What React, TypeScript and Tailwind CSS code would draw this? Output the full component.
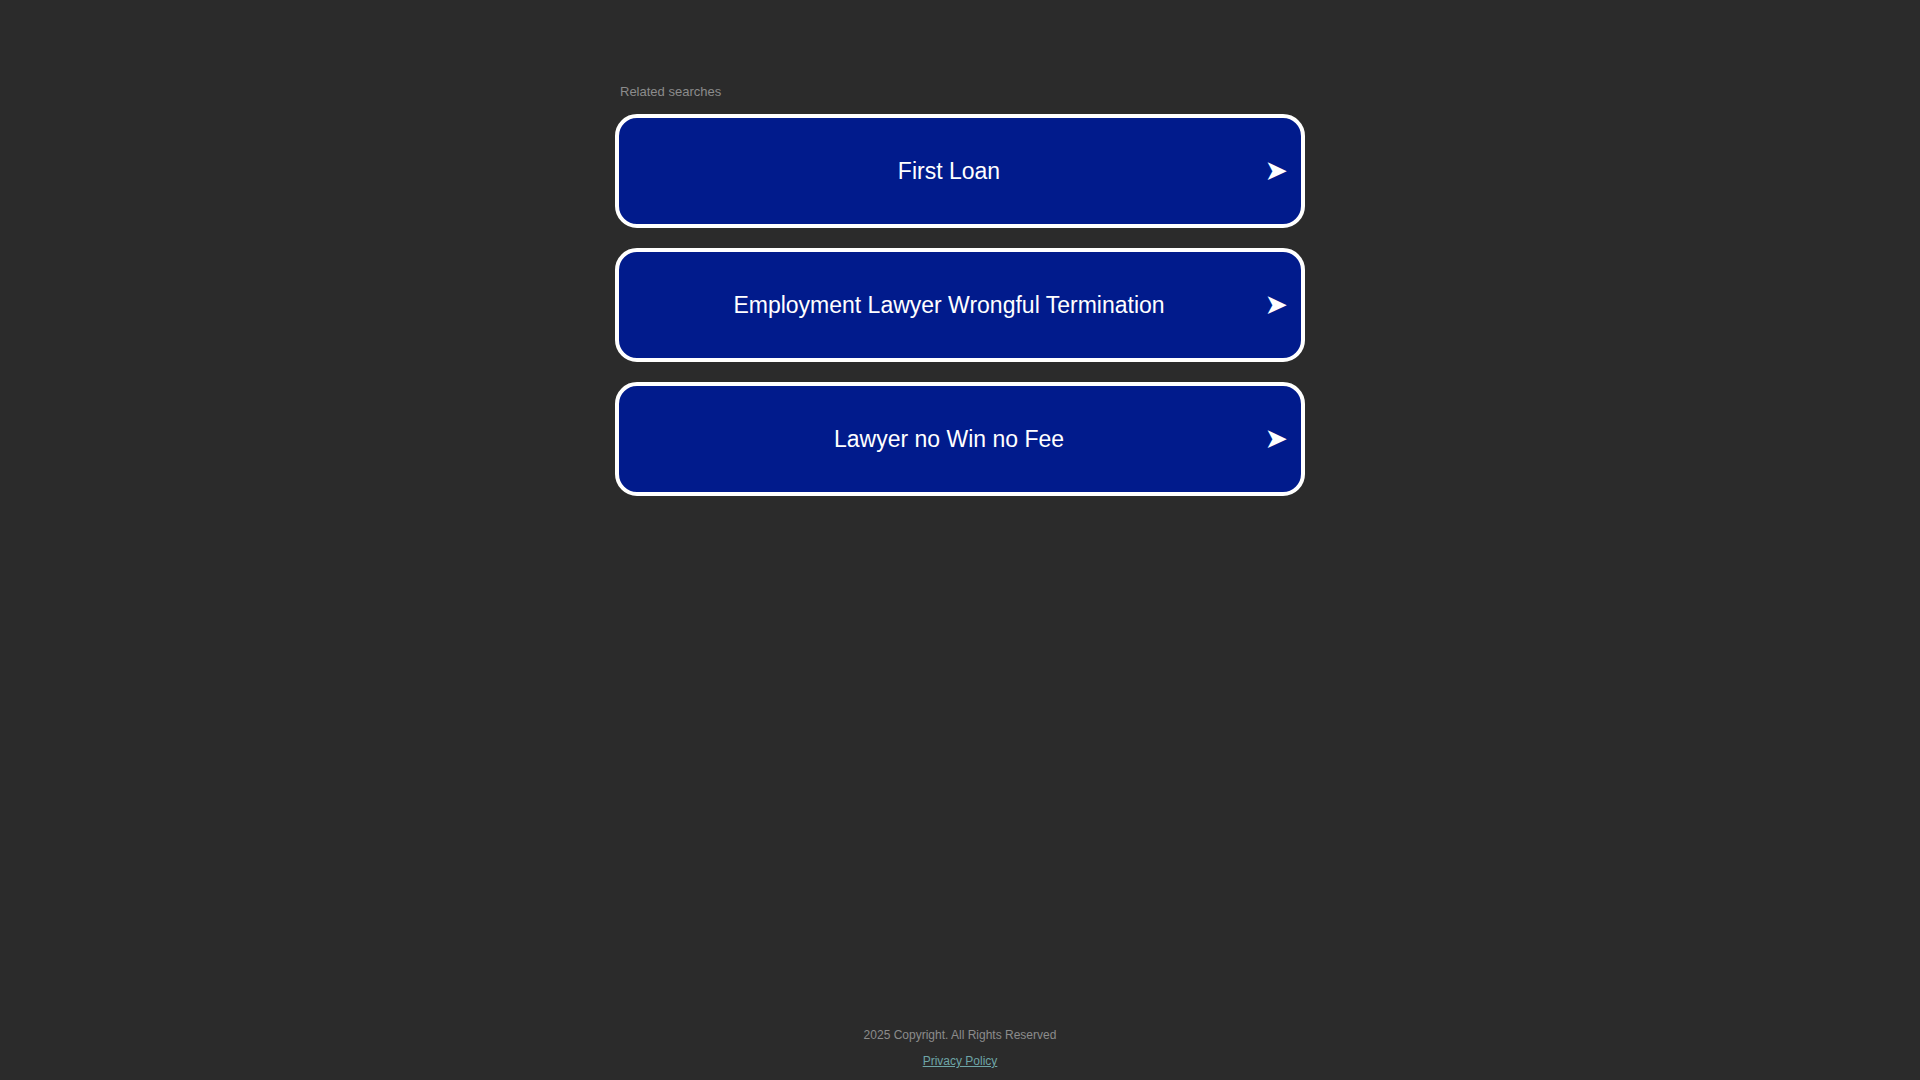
const searches = [
  'First Loan',
  'Employment Lawyer Wrongful Termination',
  'Lawyer no Win no Fee',
]

export default function App() {
  return (
    <div
      className="flex h-screen flex-col bg-[#2b2b2b]"
      style={{ fontFamily: '"Liberation Sans", Arial, sans-serif' }}
    >
      {/* Related searches */}
      <main className="flex-1 pt-[84px]">
        <div className="mx-auto w-[690px]">
          <p className="pl-[5px] text-[13px] leading-[16px] text-[#8c8c8c]">Related searches</p>
          <div className="mt-[14px] flex flex-col gap-[20px]">
            {searches.map((term) => (
              <a
                key={term}
                href="#"
                className="relative flex h-[114px] items-center rounded-[22px] border-[4px] border-white bg-[#011b8c] text-white"
              >
                <span className="w-full pr-[22px] text-center text-[23px] leading-[28px]">{term}</span>
                <span
                  className="absolute right-[13px] top-1/2 -translate-y-1/2 text-[28px] leading-none"
                  style={{ fontFamily: '"DejaVu Sans", sans-serif' }}
                >
                  ➤
                </span>
              </a>
            ))}
          </div>
        </div>
      </main>

      {/* Footer */}
      <footer className="pb-[11px] text-center text-[12px] leading-[16px]">
        <p className="text-[#8c8c8c]">2025 Copyright. All Rights Reserved</p>
        <a href="#" className="mt-[10px] inline-block text-[#6ea5a7] underline">
          Privacy Policy
        </a>
      </footer>
    </div>
  )
}
